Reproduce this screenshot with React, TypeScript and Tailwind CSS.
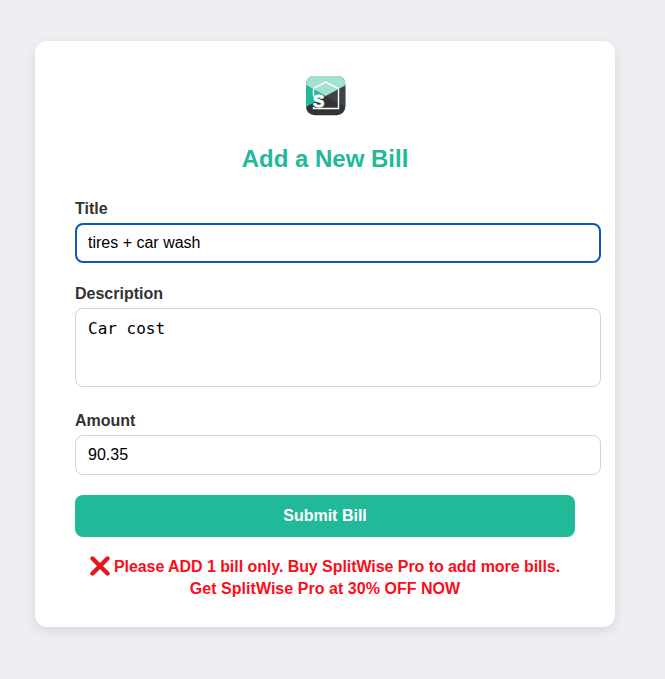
import React from "react";

function Logo() {
  return (
    <svg width="40" height="40" viewBox="0 0 40 40" className="block" aria-label="Logo">
      <defs>
        <clipPath id="tile">
          <rect x="0" y="-0.2" width="39.3" height="39.4" rx="8.5" />
        </clipPath>
      </defs>
      <g clipPath="url(#tile)">
        <rect y="-1" width="40" height="41" fill="#303438" />
        <path d="M40 9L19.7 20L40 31Z" fill="#3d4348" />
        <path d="M0 9L19.7 20L0 31Z" fill="#22b998" />
        <path d="M0 -1H40V9L19.7 20L0 9Z" fill="#a2e2d3" />
      </g>
      <path d="M7.5 20.5V12.5L19.6 6.1L32.5 12.5V32.5H7.5V31" fill="none" stroke="#fff" strokeWidth="1.4" />
      <text x="6.9" y="31.2" fontSize="17" fontWeight="700" fill="#fff" stroke="#fff" strokeWidth="0.9" textLength="11.3" lengthAdjust="spacingAndGlyphs">
        S
      </text>
    </svg>
  );
}

function CrossMark() {
  return (
    <svg width="20" height="20" viewBox="0 0 20 20" className="mr-1 inline-block align-[-4px]" aria-hidden="true">
      <path
        d="M2.5 2.5L17.5 17.5M17.5 2.5L2.5 17.5"
        stroke="#e4161b"
        strokeWidth="4.4"
        strokeLinecap="round"
      />
    </svg>
  );
}

const field =
  "block w-[526px] rounded-lg border border-[#d4d4d4] bg-white px-3 text-base text-black outline-none";
const label = "block text-base leading-[18px] font-bold text-[#333]";

export default function App() {
  return (
    <main className="min-h-[679px] bg-[#eeeff3] pt-[41px] pl-[35px] font-['Liberation_Sans',Arial,sans-serif]">
      <form
        className="h-[586px] w-[580px] rounded-xl bg-white px-10 pt-[35px] shadow-[0_4px_12px_rgba(0,0,0,0.1)]"
        onSubmit={(e) => e.preventDefault()}
      >
        <div className="flex justify-center pl-px">
          <Logo />
        </div>
        <h2 className="mt-[29px] text-center text-2xl leading-7 font-bold text-[#22b998]">Add a New Bill</h2>

        <label className={label + " mt-[27px]"}>Title</label>
        <input
          className="mt-[5px] block h-10 w-[526px] rounded-lg border-2 border-[#0a58b9] bg-white px-[11px] text-base text-black outline-none"
          defaultValue="tires + car wash"
        />

        <label className={label + " mt-[22px]"}>Description</label>
        <textarea
          className={field + " mt-[5px] h-[79px] resize-none pt-[10px] font-['DejaVu_Sans_Mono',monospace] leading-[19px]"}
          defaultValue="Car cost"
        />

        <label className={label + " mt-[25px]"}>Amount</label>
        <input className={field + " mt-[5px] h-10"} defaultValue="90.35" />

        <button className="mt-5 block h-[42px] w-full rounded-lg bg-[#22b998] text-base font-bold text-white">
          Submit Bill
        </button>

        <p className="mt-[19px] text-center text-base leading-[22px] font-bold text-[#fb0d1b]">
          <CrossMark />
          <span className="tracking-[-0.06px]">Please ADD 1 bill only. Buy SplitWise Pro to add more bills.</span>
          <br />
          <span className="tracking-[0.04px]">Get SplitWise Pro at 30% OFF NOW</span>
        </p>
      </form>
    </main>
  );
}
